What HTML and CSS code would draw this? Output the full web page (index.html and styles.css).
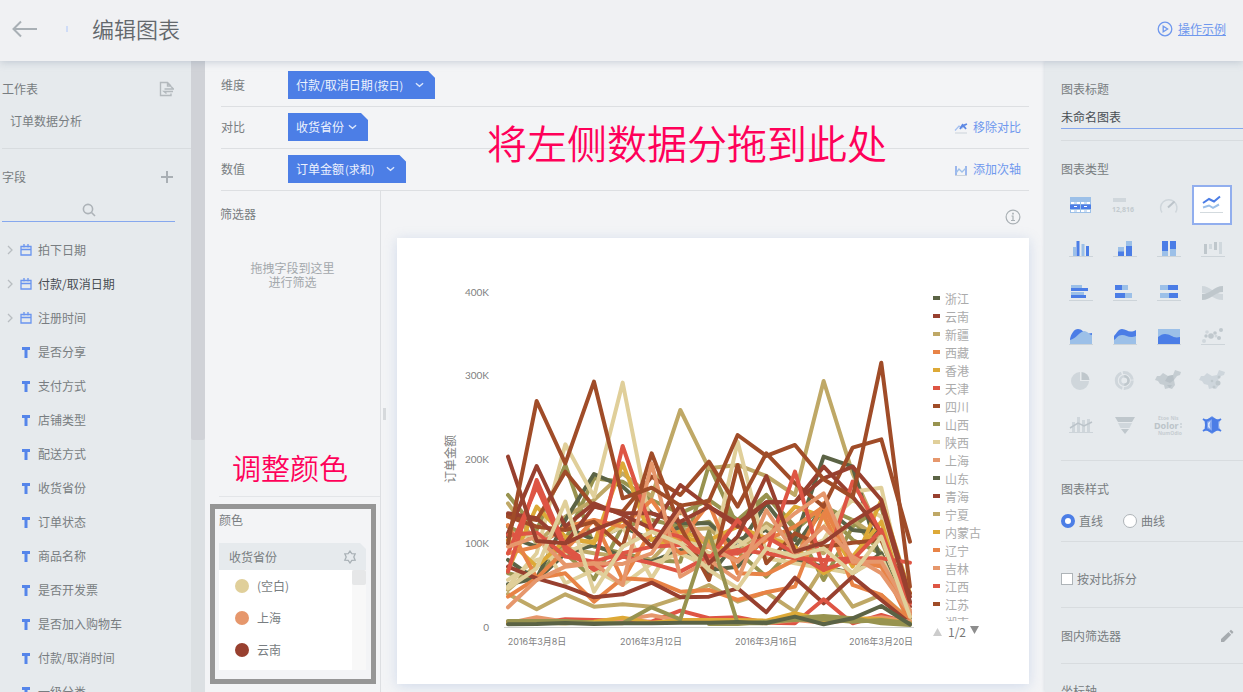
FILE: index.html
```html
<!DOCTYPE html>
<html lang="zh-CN">
<head>
<meta charset="utf-8">
<title>编辑图表</title>
<link rel="stylesheet" href="styles.css">
</head>
<body>
<div class="app">
<header class="topbar">
  <button class="icon-btn back" aria-label="返回"><svg width="26" height="18" viewBox="0 0 26 18"><path d="M9 1.500 1.500 9 9 16.500M2 9h23" fill="none" stroke="#a9b0b5" stroke-width="2"/></svg></button>
  <span class="tick"></span>
  <h1>编辑图表</h1>
  <a class="demo" href="#"><svg width="16" height="16" viewBox="0 0 16 16" fill="none" stroke="#6f98ee" stroke-width="1.3"><circle cx="8" cy="8" r="6.8"/><path d="M6.2 5.2v5.6L10.6 8z"/></svg><span>操作示例</span></a>
</header>
<div class="workspace">
  <aside class="fields">
    <div class="fields-body">
      <section class="sheet">
        <div class="line"><h2>工作表</h2><button class="icon-btn" aria-label="切换工作表"><svg width="15" height="16" viewBox="0 0 15 16" fill="none" stroke="#b3b9bd" stroke-width="1.4"><path d="M12 5 8.500 1.500H1.500v13H12v-2M8.500 1.500V5H12M5.500 8h9l-2.500-2.500M14 10.500H5l2.500 2"/></svg></button></div>
        <p class="sheet-name">订单数据分析</p>
      </section>
      <div class="line field-head"><h2>字段</h2><button class="icon-btn" aria-label="添加字段"><svg width="14" height="14" viewBox="0 0 14 14"><path d="M7 1v12M1 7h12" stroke="#a9afb4" stroke-width="2"/></svg></button></div>
      <label class="search"><svg width="14" height="14" viewBox="0 0 14 14" fill="none" stroke="#adb3b8" stroke-width="1.6"><circle cx="6" cy="6" r="4.600"/><path d="m9.500 9.500 3.500 3.500"/></svg><input type="search" aria-label="搜索字段"></label>
      <ul class="field-list">
        <li><svg class="chev" viewBox="0 0 6 10"><path d="m1 1 4 4-4 4"/></svg><svg class="cal" viewBox="0 0 12 12"><path d="M1 2.500h10v8.500H1zM1 5.500h10M4 0v3.500M8 0v3.500"/></svg>拍下日期</li>
        <li class="used"><svg class="chev" viewBox="0 0 6 10"><path d="m1 1 4 4-4 4"/></svg><svg class="cal" viewBox="0 0 12 12"><path d="M1 2.500h10v8.500H1zM1 5.500h10M4 0v3.500M8 0v3.500"/></svg>付款/取消日期</li>
        <li><svg class="chev" viewBox="0 0 6 10"><path d="m1 1 4 4-4 4"/></svg><svg class="cal" viewBox="0 0 12 12"><path d="M1 2.500h10v8.500H1zM1 5.500h10M4 0v3.500M8 0v3.500"/></svg>注册时间</li>
        <li><i></i><svg class="txt" viewBox="0 0 12 12"><path d="M2 2.500h8M6 2.500V12"/></svg>是否分享</li>
        <li><i></i><svg class="txt" viewBox="0 0 12 12"><path d="M2 2.500h8M6 2.500V12"/></svg>支付方式</li>
        <li><i></i><svg class="txt" viewBox="0 0 12 12"><path d="M2 2.500h8M6 2.500V12"/></svg>店铺类型</li>
        <li><i></i><svg class="txt" viewBox="0 0 12 12"><path d="M2 2.500h8M6 2.500V12"/></svg>配送方式</li>
        <li><i></i><svg class="txt" viewBox="0 0 12 12"><path d="M2 2.500h8M6 2.500V12"/></svg>收货省份</li>
        <li><i></i><svg class="txt" viewBox="0 0 12 12"><path d="M2 2.500h8M6 2.500V12"/></svg>订单状态</li>
        <li><i></i><svg class="txt" viewBox="0 0 12 12"><path d="M2 2.500h8M6 2.500V12"/></svg>商品名称</li>
        <li><i></i><svg class="txt" viewBox="0 0 12 12"><path d="M2 2.500h8M6 2.500V12"/></svg>是否开发票</li>
        <li><i></i><svg class="txt" viewBox="0 0 12 12"><path d="M2 2.500h8M6 2.500V12"/></svg>是否加入购物车</li>
        <li><i></i><svg class="txt" viewBox="0 0 12 12"><path d="M2 2.500h8M6 2.500V12"/></svg>付款/取消时间</li>
        <li><i></i><svg class="txt" viewBox="0 0 12 12"><path d="M2 2.500h8M6 2.500V12"/></svg>一级分类</li>
      </ul>
    </div>
    <div class="scroll"><div class="scroll-thumb"></div></div>
  </aside>

  <main class="center">
    <div class="shelves">
      <div class="shelf"><span class="shelf-name">维度</span><button class="pill long">付款/取消日期<small>(按日)</small><svg viewBox="0 0 10 6"><path d="m1 1 4 3.500L9 1"/></svg></button></div>
      <div class="shelf"><span class="shelf-name">对比</span><button class="pill">收货省份<svg viewBox="0 0 10 6"><path d="m1 1 4 3.500L9 1"/></svg></button>
        <a class="action" href="#"><svg width="14" height="14" viewBox="0 0 14 14" fill="none"><path d="M1 10.500 5 6l3 2 4-3.500" stroke="#a5c0f0" stroke-width="1.300"/><path d="M6 9 8.500 5l2 2 1.500 2M9 5.500 13 4" stroke="#5d88e4" stroke-width="1.800"/><path d="M1 13h12" stroke="#ccd3da"/></svg>移除对比</a></div>
      <div class="shelf"><span class="shelf-name">数值</span><button class="pill long">订单金额<small>(求和)</small><svg viewBox="0 0 10 6"><path d="m1 1 4 3.500L9 1"/></svg></button>
        <a class="action" href="#"><svg width="14" height="14" viewBox="0 0 14 14" fill="none"><path d="M2 4v9M12 4v9" stroke="#6e97e9" stroke-width="1.300"/><path d="m2 11 3-4 3 3 4-4" stroke="#9fc0ea" stroke-width="1.300"/><path d="M1 13.500h12" stroke="#ccd3da"/></svg>添加次轴</a></div>
    </div>
    <div class="split">
      <div class="options">
        <section class="filters"><h2>筛选器</h2><p>拖拽字段到这里<br>进行筛选</p></section>
        <section class="colors">
          <h2>颜色</h2>
          <div class="color-head"><span>收货省份</span><button class="icon-btn" aria-label="设置颜色"><svg width="14" height="14" viewBox="0 0 14 14" fill="none" stroke="#a9b1b6" stroke-width="1.300"><path d="M7 1 8.800 3.600 12.200 3.800 10.800 7 12.200 10.200 8.800 10.400 7 13 5.200 10.400 1.800 10.200 3.200 7 1.800 3.800 5.200 3.600z"/></svg></button></div>
          <div class="color-body">
            <ul><li><b class="dot sand"></b>(空白)</li><li><b class="dot peach"></b>上海</li><li><b class="dot wine"></b>云南</li></ul>
            <div class="mini-scroll"><div></div></div>
          </div>
        </section>
      </div>
      <div class="stage">
        <span class="grip"></span>
        <button class="icon-btn info" aria-label="说明"><svg width="16" height="16" viewBox="0 0 16 16" fill="none" stroke="#a9b0b4" stroke-width="1.200"><circle cx="8" cy="8" r="6.900"/><path d="M6.500 7H8v4.500M6 11.500h4" /><path d="M8 3.700v1.700" stroke-width="1.700"/></svg></button>
        <div class="card">
          <svg class="plot" viewBox="0 0 536 446" preserveAspectRatio="xMinYMin meet">
            <g class="axis-y"><text x="92" y="58">400K</text><text x="92" y="141">300K</text><text x="92" y="225">200K</text><text x="92" y="309">100K</text><text x="92" y="393">0</text></g>
            <text class="axis-title" transform="translate(58 221) rotate(-90)">订单金额</text>
            <path d="M107 389.500h410" stroke="#cfcfcf"/>
            <g class="series" transform="translate(93 102) scale(.3333)">
              <g stroke="#98934f">
                <polyline points="54,465 140,570 226,375 312,620 398,640 485,660 571,665 657,375 743,560 829,465 915,570 1001,500 1088,540 1174,640 1260,850"/>
                <polyline points="54,700 140,720 226,600 312,415 398,425 485,480 571,520 657,480 743,540 829,465 915,560 1001,720 1088,560 1174,500 1260,830"/>
                <polyline points="54,560 140,600 226,640 312,718 398,560 485,540 571,560 657,545 743,635 829,710 915,620 1001,510 1088,600 1174,640 1260,840"/>
              </g>
              <g stroke="#bfa866">
                <polyline points="54,490 140,610 226,530 312,480 398,400 485,470 571,210 657,385 743,375 829,408 915,465 1001,123 1088,400 1174,590 1260,830"/>
                <polyline points="54,750 140,675 226,625 312,640 398,650 485,660 571,570 657,565 743,640 829,550 915,600 1001,640 1088,540 1174,600 1260,820"/>
                <polyline points="54,762 140,808 226,763 312,800 398,793 485,800 571,772 657,735 743,785 829,757 915,815 1001,680 1088,800 1174,765 1260,840"/>
              </g>
              <g stroke="#5b6345">
                <polyline points="54,733 140,715 226,540 312,402 398,440 485,520 571,550 657,550 743,625 829,490 915,600 1001,350 1088,380 1174,670 1260,835"/>
                <polyline points="54,660 140,720 226,640 312,615 398,650 485,665 571,630 657,690 743,680 829,590 915,620 1001,500 1088,570 1174,580 1260,820"/>
                <polyline points="54,590 140,620 226,560 312,600 398,560 485,600 571,560 657,710 743,600 829,570 915,660 1001,680 1088,700 1174,640 1260,850"/>
              </g>
              <g stroke="#e0cf9a">
                <polyline points="54,740 140,640 226,313 312,470 398,128 485,570 571,600 657,690 743,305 829,640 915,640 1001,600 1088,455 1174,443 1260,820"/>
                <polyline points="54,600 140,580 226,730 312,690 398,735 485,670 571,640 657,680 743,600 829,655 915,670 1001,685 1088,700 1174,650 1260,840"/>
                <polyline points="54,720 140,660 226,640 312,600 398,560 485,715 571,580 657,640 743,620 829,560 915,640 1001,560 1088,480 1174,530 1260,830"/>
              </g>
              <g stroke="#dda937">
                <polyline points="54,690 140,500 226,590 312,610 398,370 485,600 571,575 657,600 743,560 829,595 915,500 1001,530 1088,680 1174,480 1260,760"/>
                <polyline points="54,600 140,680 226,600 312,605 398,540 485,620 571,590 657,610 743,640 829,590 915,620 1001,700 1088,650 1174,545 1260,830"/>
              </g>
              <g stroke="#e88346">
                <polyline points="54,555 140,715 226,700 312,785 398,715 485,720 571,755 657,750 743,780 829,757 915,740 1001,520 1088,735 1174,765 1260,845"/>
                <polyline points="54,770 140,715 226,630 312,540 398,560 485,480 571,600 657,490 743,700 829,703 915,660 1001,490 1088,665 1174,680 1260,830"/>
                <polyline points="54,640 140,620 226,560 312,540 398,720 485,570 571,640 657,620 743,660 829,600 915,560 1001,500 1088,670 1174,670 1260,850"/>
              </g>
              <g stroke="#a04c28">
                <polyline points="54,530 140,560 226,570 312,545 398,620 485,340 571,560 657,720 743,375 829,670 915,580 1001,620 1088,608 1174,600 1260,760"/>
                <polyline points="54,525 140,540 226,395 312,500 398,515 485,410 571,465 657,365 743,500 829,340 915,430 1001,500 1088,323 1174,298 1260,605"/>
              </g>
              <g stroke="#98402f">
                <polyline points="54,520 140,535 226,610 312,500 398,520 485,520 571,545 657,500 743,550 829,487 915,487 1001,415 1088,380 1174,480 1260,770"/>
                <polyline points="54,580 140,378 226,560 312,490 398,525 485,565 571,435 657,500 743,560 829,487 915,487 1001,380 1088,470 1174,580 1260,800"/>
                <polyline points="54,680 140,715 226,740 312,772 398,763 485,728 571,772 657,770 743,745 829,817 915,713 1001,790 1088,710 1174,780 1260,850"/>
              </g>
              <g stroke="#de5544">
                <polyline points="54,585 140,578 226,650 312,665 398,640 485,620 571,615 657,650 743,630 829,640 915,655 1001,660 1088,655 1174,655 1260,668"/>
                <polyline points="54,640 140,440 226,630 312,690 398,650 485,670 571,695 657,650 743,640 829,590 915,640 1001,690 1088,660 1174,570 1260,820"/>
                <polyline points="54,695 140,420 226,620 312,680 398,318 485,570 571,590 657,660 743,540 829,640 915,395 1001,690 1088,425 1174,580 1260,790"/>
                <polyline points="54,845 140,850 226,838 312,840 398,842 485,845 571,812 657,835 743,832 829,848 915,850 1001,778 1088,850 1174,825 1260,850"/>
              </g>
              <g stroke="#e6976c">
                <polyline points="54,802 140,720 226,680 312,670 398,735 485,370 571,710 657,660 743,720 829,510 915,640 1001,560 1088,650 1174,700 1260,820"/>
                <polyline points="54,620 140,590 226,675 312,670 398,672 485,640 571,510 657,620 743,665 829,590 915,520 1001,460 1088,665 1174,665 1260,810"/>
                <polyline points="54,850 140,832 226,845 312,850 398,840 485,826 571,842 657,840 743,845 829,850 915,840 1001,848 1088,840 1174,832 1260,845"/>
              </g>
              <g>
                <polyline stroke="#e0cf9a" points="54,745 140,685 226,485 312,755 398,620 485,575 571,610 657,690 743,745 829,625 915,650 1001,625 1088,700 1174,590 1260,830"/>
                <polyline stroke="#98402f" points="54,350 140,603 226,610 312,570 398,537 485,620 571,495 657,670 743,590 829,408 915,635 1001,608 1088,545 1174,492 1260,785"/>
                <polyline stroke="#a04c28" points="54,610 140,183 226,370 312,125 398,475 485,443 571,497 657,483 743,285 829,348 915,315 1001,418 1088,472 1174,68 1260,740"/>
                <polyline stroke="#dda937" points="54,850 140,848 226,850 312,845 398,833 485,848 571,840 657,840 743,840 829,842 915,820 1001,840 1088,835 1174,838 1260,850"/>
                <polyline stroke="#98934f" points="54,843 140,843 226,843 312,848 398,850 485,802 571,838 657,575 743,850 829,850 915,835 1001,828 1088,835 1174,850 1260,855"/>
                <polyline stroke="#98934f" points="657,852 743,852 829,845 915,840 1001,838 1088,845 1174,840 1260,850"/>
                <polyline stroke="#5b6345" points="54,853 140,852 226,849 312,852 398,850 485,850 571,848 657,848 743,846 829,849 915,830 1001,853 1088,835 1174,798 1260,853"/>
              </g>
            </g>
            <g class="axis-x"><text x="140" y="407">2016年3月8日</text><text x="254" y="407">2016年3月12日</text><text x="369" y="407">2016年3月16日</text><text x="484" y="407">2016年3月20日</text></g>
          </svg>
          <div class="legend">
            <ul>
              <li><b class="moss"></b>浙江</li><li><b class="wine"></b>云南</li><li><b class="khaki"></b>新疆</li><li><b class="orange"></b>西藏</li><li><b class="gold"></b>香港</li><li><b class="red"></b>天津</li><li><b class="rust"></b>四川</li><li><b class="olive"></b>山西</li><li><b class="sand"></b>陕西</li><li><b class="peach"></b>上海</li><li><b class="moss"></b>山东</li><li><b class="wine"></b>青海</li><li><b class="khaki"></b>宁夏</li><li><b class="gold"></b>内蒙古</li><li><b class="orange"></b>辽宁</li><li><b class="peach"></b>吉林</li><li><b class="red"></b>江西</li><li><b class="rust"></b>江苏</li><li><b></b>湖南</li>
            </ul>
            <div class="pager"><button class="icon-btn" aria-label="上一页"><svg width="9" height="9" viewBox="0 0 9 9"><path d="M4.500 0 9 8H0z" fill="#ccc"/></svg></button><span>1/2</span><button class="icon-btn" aria-label="下一页"><svg width="9" height="12" viewBox="0 0 9 12"><path d="M4.500 8 9 0H0z" fill="#8d8d8d"/></svg></button></div>
          </div>
        </div>
      </div>
    </div>
  </main>

  <aside class="props">
    <section class="p-title"><label for="title">图表标题</label><input id="title" type="text" value="未命名图表"></section>
    <section class="p-types"><h2>图表类型</h2>
      <div class="types">
        <button aria-label="表格"><svg viewBox="0 0 40 40"><path fill="#9cc0e8" d="M10 12h21v16H10z"/><path fill="#fff" d="M11 17h9v2h-9zM21 17h9v2h-9zM11 25h9v2h-9zM21 25h9v2h-9z"/><path fill="#4b7de6" d="M10 19.500h10v4.500h-10zM21 19.500h10v4.500h-10z"/><path stroke="#9cc0e8" d="M14 18h3M24 18h3M14 26h3M24 26h3"/><path stroke="#fff" d="M14 21.500h3M24 21.500h3"/></svg></button>
        <button aria-label="指标卡"><svg viewBox="0 0 40 40"><path fill="#d0d7dc" d="M9 13h13v4H9z"/><text x="8" y="27" class="num">12,816</text></svg></button>
        <button aria-label="仪表盘"><svg viewBox="0 0 40 40" fill="none" stroke="#cfd6db" stroke-width="1.500"><path d="M14 27.500a8.200 8.200 0 1 1 13.500 0"/><path stroke="#bcc4ca" stroke-width="2" d="m20 22.500 6.500-6"/></svg></button>
        <button class="on" aria-label="折线图"><svg viewBox="0 0 40 40" fill="none" stroke-width="2"><path stroke="#4b7de6" d="m11 18 6-4 5 2.500 6-5"/><path stroke="#9cc0e8" d="m11 22.500 6-2 4 2.300 6-3.300"/><path stroke="#d3dade" stroke-width="1" d="M8 27.500h23"/></svg></button>
        <button aria-label="柱状图"><svg viewBox="0 0 40 40"><path fill="#9cc0e8" d="M13 18h3v9h-3zM21.500 15h3v12h-3z"/><path fill="#4b7de6" d="M16.500 12h3v15h-3zM26 17h3v10h-3z"/><path class="base" d="M9 27.500h24"/></svg></button>
        <button aria-label="堆积柱状图"><svg viewBox="0 0 40 40"><path fill="#9cc0e8" d="M14 18h6v5h-6zM22 12h6v5h-6z"/><path fill="#4b7de6" d="M14 22.500h6V27h-6zM22 17h6v10h-6z"/><path class="base" d="M9 27.500h24"/></svg></button>
        <button aria-label="百分比柱状图"><svg viewBox="0 0 40 40"><path fill="#9cc0e8" d="M14 22h6v5h-6zM22 20h6v7h-6z"/><path fill="#4b7de6" d="M14 12h6v10h-6zM22 12h6v8h-6z"/><path class="base" d="M9 27.500h24"/></svg></button>
        <button aria-label="瀑布图"><svg viewBox="0 0 40 40"><path fill="#bfc7cc" d="M12 15h3v10h-3zM22 13h3v8h-3z"/><path fill="#d0d8dd" d="M17 15h3v5h-3zM27 13h3v12h-3z"/><path class="base" d="M9 27.500h24"/></svg></button>
        <button aria-label="条形图"><svg viewBox="0 0 40 40"><path fill="#9cc0e8" d="M11 12h11v3H11zM11 19h13v3H11z"/><path fill="#4b7de6" d="M11 15h17v3H11zM11 22h15v3H11z"/><path class="base" d="M9 27.500h24"/></svg></button>
        <button aria-label="堆积条形图"><svg viewBox="0 0 40 40"><path fill="#9cc0e8" d="M18 12h6v5h-6zM21 20h7v5h-7z"/><path fill="#4b7de6" d="M11 12h7v5h-7zM11 20h10v5H11z"/><path class="base" d="M9 27.500h24"/></svg></button>
        <button aria-label="百分比条形图"><svg viewBox="0 0 40 40"><path fill="#9cc0e8" d="M12 12h8v5h-8zM12 20h9v5h-9z"/><path fill="#4b7de6" d="M20 12h10v5H20zM21 20h9v5h-9z"/><path class="base" d="M9 27.500h24"/></svg></button>
        <button aria-label="对比图"><svg viewBox="0 0 40 40"><path fill="#cfd6db" d="M10 13c8 0 12 8 21 8v6c-10 0-13-7-21-7z"/><path fill="#bfc7cc" d="M10 21c9 0 12-8 21-8v6c-8 0-12 8-21 8z"/></svg></button>
        <button aria-label="面积图"><svg viewBox="0 0 40 40"><path fill="#4b7de6" d="M10 27v-5c1-5 4-10 8-10s5 3 8 5l6-1v11z"/><path fill="#9cc0e8" d="M10 27v-4c6-1 9-8 14-9 4 0 5 4 8 4v9z"/><path class="base" d="M9 27.500h24"/></svg></button>
        <button aria-label="堆积面积图"><svg viewBox="0 0 40 40"><path fill="#4b7de6" d="M10 27v-8c3-3 4-7 8-7 5 0 7 5 14 1v14z"/><path fill="#9cc0e8" d="M10 27v-4c3-2 4-5 8-5 5 0 7 4 14 1v8z"/><path class="base" d="M9 27.500h24"/></svg></button>
        <button aria-label="百分比面积图"><svg viewBox="0 0 40 40"><path fill="#9cc0e8" d="M10 12h22v15H10z"/><path fill="#4b7de6" d="M10 27v-7c3-2 4-3 7-3 6 0 8 5 15 3v7z"/><path class="base" d="M9 27.500h24"/></svg></button>
        <button aria-label="散点图"><svg viewBox="0 0 40 40"><g fill="#c0c8cd"><circle cx="29" cy="13" r="2"/><circle cx="23" cy="16" r="1.800"/><circle cx="19" cy="19" r="2.800"/><circle cx="27" cy="21" r="2"/><circle cx="14" cy="19" r="1.700"/></g><g fill="#d0d7dc"><circle cx="15" cy="15" r="1.800"/><circle cx="12" cy="24" r="2"/><circle cx="24" cy="19" r="1.500"/></g><path class="base" d="M9 27.500h24"/></svg></button>
        <button aria-label="饼图"><svg viewBox="0 0 40 40"><path fill="#cfd6db" d="M20 11v9h9a9 9 0 1 1-9-9z"/><path fill="#bfc7cc" d="M21.500 11a8.500 8.500 0 0 1 8 8h-8z"/></svg></button>
        <button aria-label="环形图"><svg viewBox="0 0 40 40" fill="none"><circle cx="20.300" cy="19.500" r="8" stroke="#cfd6db" stroke-width="3" stroke-dasharray="13 1.500 20 1.500"/><circle cx="20.300" cy="19.500" r="4.200" stroke="#cfd6db" stroke-width="2.500"/><path d="M20.300 15.300a4.200 4.200 0 0 1 0 8.400" stroke="#bfc7cc" stroke-width="2.500"/></svg></button>
        <button aria-label="面积地图"><svg viewBox="0 0 40 40"><path fill="#c5cdd2" d="m9 15 3 0 3-3 5 3 5-1 2-5 3 1 3 1-1 3-3 1-3 4 1 5-3 4-3-1-4 1-1-4-4-1-2-3-3-1z"/><path fill="#b8c1c7" d="m20 15 5-1 1 5-4 3-5-2zM19 24h5l-2 3z"/></svg></button>
        <button aria-label="气泡地图"><svg viewBox="0 0 40 40"><path fill="#ced6dc" d="m9 15 3 0 3-3 5 3 5-1 2-5 3 1 3 1-1 3-3 1-3 4 1 5-3 4-3-1-4 1-1-4-4-1-2-3-3-1z"/><g fill="#bfc8cd"><circle cx="20" cy="20" r="1.300"/><circle cx="26" cy="22" r="2.500"/><circle cx="22" cy="26" r="1.500"/><circle cx="27" cy="16" r="1.500"/></g></svg></button>
        <button aria-label="组合图"><svg viewBox="0 0 40 40"><path fill="#cfd6db" d="M12 17h3v10h-3zM17 12h3v15h-3zM22 15h3v12h-3zM27 14h3v13h-3z"/><path fill="none" stroke="#bbc3c9" stroke-width="1.500" d="m10 23 8-5 6 3 8-4"/><path class="base" d="M9 27.500h24"/></svg></button>
        <button aria-label="漏斗图"><svg viewBox="0 0 40 40"><path fill="#bfc7cc" d="M11 12h20l-3 5H14zM17 24h8l-4 5z"/><path fill="#d0d7dc" d="M14 18h14l-2.500 5h-9z"/></svg></button>
        <button aria-label="词云"><svg viewBox="0 0 40 40"><text x="10" y="15" class="tiny">Etoe Nis</text><text x="6" y="24" class="word">Dolor</text><text x="10" y="30" class="tiny">NumOdio</text><path stroke="#d0d7dc" stroke-width="2" d="M33 18v6" stroke-dasharray="2 1"/></svg></button>
        <button aria-label="雷达图"><svg viewBox="0 0 40 40"><path fill="#7fa4ee" d="m20 11 4 3h4l-1 6 1 6h-4l-4 3-4-3h-4l1-6-1-6h4z"/><path fill="none" stroke="#4b7de6" stroke-width="2" d="m20 13-6 3v8l6 3M11 14l3 2M29 14l-3 2M11 26l3-2M29 26l-3-2"/><path fill="#4b7de6" d="M20 12v16l6-3V15z"/><path fill="#d6e3fb" d="m18.500 16-2.500 2v4l2.500 2-1-4z"/></svg></button>
      </div>
    </section>
    <section class="p-style"><h2>图表样式</h2><div class="radios"><label><input type="radio" name="style" checked>直线</label><label><input type="radio" name="style">曲线</label></div></section>
    <section class="p-break"><label><input type="checkbox">按对比拆分</label></section>
    <section class="p-filter"><h2>图内筛选器</h2><button class="icon-btn" aria-label="编辑筛选器"><svg width="14" height="14" viewBox="0 0 14 14" fill="#a6abaf"><path d="M1 13v-3l7.500-7 2.700 2.700L4 13zM9.300 2.300 11 .8 13.500 3 12 4.900z"/></svg></button></section>
    <section class="p-axis"><h2>坐标轴</h2></section>
  </aside>
</div>
<p class="note note-drag">将左侧数据分拖到此处</p>
<p class="note note-color">调整颜色</p>
<div class="note-frame"></div>
</div>
</body>
</html>
```
FILE: styles.css
```css
* { box-sizing: border-box; }
body { margin: 0; font: 12px/20px "Noto Sans CJK SC", sans-serif; color: #787d81; overflow: hidden; }
h1, h2, p, ul { margin: 0; padding: 0; font-weight: inherit; }
h2 { font-size: 12px; }
ul { list-style: none; }
button, input { font: inherit; color: inherit; }
svg { display: block; flex: none; }
.app { position: relative; display: flex; flex-direction: column; height: 100vh; background: #f3f4f6; }
.icon-btn { display: flex; padding: 0; border: 0; background: none; }

.topbar { display: flex; align-items: center; height: 61px; flex: none; padding: 0 17px 3px 12px; background: #f0f1f3; box-shadow: 0 1px 8px rgba(130, 145, 165, .4); z-index: 2; }
.tick { width: 2px; height: 6px; margin: 0 24px 0 28px; background: #cfdcf7; }
.topbar h1 { font-size: 22px; line-height: 32px; padding-bottom: 2px; font-weight: 350; color: #63686c; }
.demo { display: flex; gap: 5px; align-items: center; margin-left: auto; color: #6f98ee; text-decoration: none; }
.demo span { text-decoration: underline; }

.workspace { display: flex; flex: 1; min-height: 0; }
.fields { display: flex; width: 205px; flex: none; background: #e6eaed; }
.fields-body { flex: 1; min-width: 0; padding-left: 2px; overflow: hidden; }
.line { display: flex; justify-content: space-between; align-items: center; padding-right: 17px; }
.sheet { padding: 18px 0 17px; border-bottom: 1px solid #d8dcdf; }
.sheet-name { margin-top: 12px; padding-left: 8px; }
.field-head { padding-top: 18px; }
.search { display: flex; justify-content: center; align-items: center; position: relative; height: 23px; margin: 12px 16px 11px 0; border-bottom: 1px solid #86a8ee; }
.search input { position: absolute; inset: 0; width: 100%; height: 20px; border: 0; background: none; outline: 0; }
.field-list li { display: flex; align-items: center; height: 34px; padding-left: 5px; }
.field-list i { width: 6px; margin-right: 7px; }
.chev { width: 6px; height: 10px; margin-right: 7px; fill: none; stroke: #b8bdc1; stroke-width: 1.300; }
.cal, .txt { width: 12px; height: 12px; margin-right: 6px; fill: none; stroke: #6994ef; }
.cal { stroke-width: 1.300; }
.txt { stroke: #5585ea; stroke-width: 3; }
.used { color: #484d53; }
.scroll { width: 14px; background: #dce0e3; }
.scroll-thumb { height: 60%; background: #d0d2d7; border-radius: 0 0 2px 2px; }

.center { display: flex; flex-direction: column; flex: 1; min-width: 0; }
.shelves { padding: 4px 16px 0; }
.shelf { display: flex; align-items: center; padding: 6px 0 7px; border-bottom: 1px solid #dddfe2; }
.shelf-name { width: 67px; }
.pill { display: flex; align-items: center; gap: 4px; height: 28px; padding: 0 11px 0 8px; border: 0; background: #4c7ee6; color: #edf2fd; clip-path: polygon(0 0, calc(100% - 7px) 0, 100% 7px, 100% 100%, 0 100%); }
.pill small { margin-left: -3px; font-size: 11px; }
.pill svg { width: 9px; height: 6px; fill: none; stroke: #dbe6fc; stroke-width: 1.500; }
.pill.long svg { margin-left: 8px; }
.action { display: flex; align-items: center; gap: 5px; margin-left: auto; padding-right: 8px; color: #6f98ee; text-decoration: none; }
.split { display: flex; flex: 1; min-height: 0; }
.options { display: flex; flex-direction: column; justify-content: space-between; width: 176px; flex: none; border-right: 1px solid #dddfe2; }
.filters { padding: 13px 0 0 15px; }
.filters p { margin-top: 37px; padding-right: 15px; line-height: 14px; text-align: center; color: #a3a8ac; }
.colors { height: 196px; margin-left: 14px; padding: 13px 14px 0 0; border-top: 1px solid #e3e5e8; }
.color-head { display: flex; align-items: center; justify-content: space-between; height: 27px; margin-top: 13px; padding: 0 9px 0 10px; background: #e6eaed; clip-path: polygon(0 0, calc(100% - 6px) 0, 100% 6px, 100% 100%, 0 100%); }
.color-body { display: flex; background: #fff; }
.color-body ul { flex: 1; padding-bottom: 4px; }
.color-body li { display: flex; align-items: center; gap: 8px; height: 32px; padding-left: 16px; }
.dot { width: 14px; height: 14px; border-radius: 50%; }
.mini-scroll { width: 14px; background: #f8f8f8; }
.mini-scroll div { height: 15px; background: #e6e7e8; border-radius: 2px; }

.stage { position: relative; display: flex; flex-direction: column; flex: 1; min-width: 0; padding: 18px 16px 8px; }
.grip { position: absolute; left: 2px; top: 217px; width: 3px; height: 12px; background: #d6d9dc; }
.info { align-self: flex-end; margin: 0 8px 13px 0; }
.card { display: flex; flex: 1; min-height: 0; background: #fff; box-shadow: 0 2px 12px rgba(130, 160, 210, .3); }
.plot { flex: 1; min-width: 0; height: 100%; }
.plot text { font-size: 10px; fill: #808080; }
.plot .axis-y { font-family: Lato, sans-serif; text-anchor: end; }
.axis-x { text-anchor: middle; }
.plot .axis-x text { font-family: Inter, "Noto Sans CJK SC", sans-serif; font-size: 9px; }
.plot .axis-title { font-size: 12px; text-anchor: middle; }
.series { fill: none; stroke-width: 12; stroke-linejoin: round; stroke-linecap: round; }
.legend { width: 96px; padding-top: 52px; color: #ababab; }
.legend ul { height: 331px; overflow: hidden; }
.legend li { display: flex; align-items: center; gap: 5px; height: 18px; line-height: 18px; }
.legend b { width: 7px; height: 4px; margin-bottom: 2px; }
.pager { display: flex; align-items: center; gap: 6px; line-height: 22px; color: #777; }
.pager button:last-child { margin-left: -2px; }
.moss { background: #5b6345; }
.wine { background: #98402f; }
.khaki { background: #bfa866; }
.orange { background: #e88346; }
.gold { background: #dda937; }
.red { background: #de5544; }
.rust { background: #a04c28; }
.olive { background: #98934f; }
.sand { background: #e0cf9a; }
.peach { background: #e6976c; }

.props { width: 198px; flex: none; padding-left: 16px; background: #e6eaed; box-shadow: -1px 0 3px rgba(130, 145, 165, .2); overflow: hidden; }
.props section { border-bottom: 1px solid #d8dcdf; }
.p-title { padding: 18px 0 11px; }
.p-title label { display: block; }
.p-title input { display: block; width: 100%; height: 22px; margin-top: 8px; padding: 0 0 2px; border: 0; border-bottom: 1px solid #86a8ee; background: none; color: #484d53; border-radius: 0; }
.p-types { padding: 18px 0 15px; }
.types { display: grid; grid-template-columns: repeat(4, 40px); gap: 4px; margin: 6px 0 0 -1px; }
.types button { height: 40px; padding: 0; border: 0; background: none; }
.types svg { width: 40px; height: 40px; }
.types .on { border: 2px solid #91aeee; background: #fff; }
.types .on svg { margin: -2px; }
.base { stroke: #cdd4d9; }
.num { font: bold 7px "Noto Sans", sans-serif; fill: #c3cacf; }
.word { font: bold 9px "Noto Sans", sans-serif; fill: #bcc4c9; }
.tiny { font: bold 5px "Noto Sans", sans-serif; fill: #c6cdd2; }
.p-style { padding: 18px 0 10px; }
.radios { display: flex; gap: 20px; margin-top: 12px; }
.radios label, .p-break label { display: flex; align-items: center; gap: 4px; }
.props input[type=radio], .props input[type=checkbox] { appearance: none; margin: 0; background: #fff; border: 1px solid #aeb4b8; }
.props input[type=radio] { width: 14px; height: 14px; border-radius: 50%; }
.props input[type=radio]:checked { border: 4px solid #4c7ee6; }
.props input[type=checkbox] { width: 12px; height: 12px; }
.p-break { padding: 27px 0 18px; }
.p-filter { display: flex; align-items: center; justify-content: space-between; padding: 18px 9px 17px 0; }
.p-axis { padding-top: 17px; }

.note { position: absolute; font-weight: 350; color: #ff0059; white-space: nowrap; z-index: 3; }
.note-drag { left: 487px; top: 118px; font-size: 40px; line-height: 48px; }
.note-color { left: 232px; top: 449px; font-size: 29px; line-height: 36px; }
.note-frame { position: absolute; left: 210px; top: 504px; width: 166px; height: 180px; border: 5px solid #969696; z-index: 3; }
```
